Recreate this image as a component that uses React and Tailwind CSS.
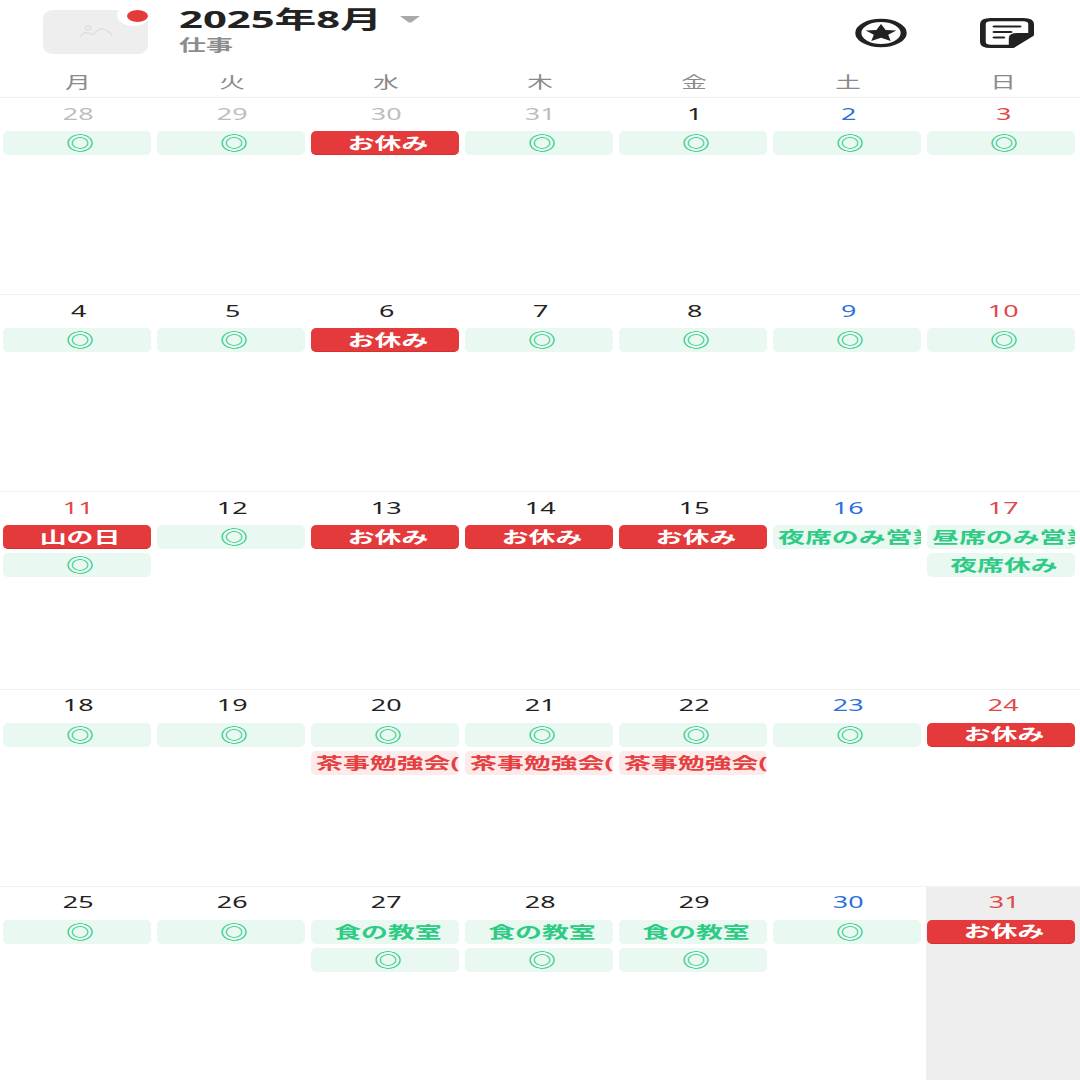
const font = { fontFamily: '"Noto Sans", "Noto Sans CJK JP", sans-serif' }

const O = { t: '◎', k: 'ok' }
const R = (t) => ({ t, k: 'red' })
const G = (t, long) => ({ t, k: 'green', long })
const P = { t: '茶事勉強会(', k: 'pink', long: true }
const OFF = R('お休み')
const K = { t: '食の教室', k: 'green' }

const weeks = [
  [
    { d: 28, m: true, e: [O] }, { d: 29, m: true, e: [O] }, { d: 30, m: true, e: [OFF] }, { d: 31, m: true, e: [O] },
    { d: 1, e: [O] }, { d: 2, e: [O] }, { d: 3, e: [O] },
  ],
  [
    { d: 4, e: [O] }, { d: 5, e: [O] }, { d: 6, e: [OFF] }, { d: 7, e: [O] },
    { d: 8, e: [O] }, { d: 9, e: [O] }, { d: 10, e: [O] },
  ],
  [
    { d: 11, c: 'text-[#e04848]', e: [R('山の日'), O] }, { d: 12, e: [O] }, { d: 13, e: [OFF] }, { d: 14, e: [OFF] },
    { d: 15, e: [OFF] }, { d: 16, e: [G('夜席のみ営業', true)] }, { d: 17, e: [G('昼席のみ営業', true), G('夜席休み')] },
  ],
  [
    { d: 18, e: [O] }, { d: 19, e: [O] }, { d: 20, e: [O, P] }, { d: 21, e: [O, P] },
    { d: 22, e: [O, P] }, { d: 23, e: [O] }, { d: 24, e: [OFF] },
  ],
  [
    { d: 25, e: [O] }, { d: 26, e: [O] }, { d: 27, e: [K, O] }, { d: 28, e: [K, O] },
    { d: 29, e: [K, O] }, { d: 30, e: [O] }, { d: 31, today: true, e: [OFF] },
  ],
]

const labels = ['月', '火', '水', '木', '金', '土', '日']

const tones = {
  ok: 'bg-[#e9f8f1] text-[#2ccb85] font-bold text-[18px]',
  green: 'bg-[#e9f8f1] text-[#2ecb85] font-bold text-[16px]',
  red: 'bg-[#e53a3c] text-white font-bold text-[16px] border-b border-[#d5302f]',
  pink: 'bg-[#fdeaea] text-[#e5403f] font-bold text-[16px]',
}

function Event({ ev, today }) {
  return (
    <div className={`w-[148px] h-6 rounded-[5px] overflow-hidden flex items-center leading-none ${today ? 'ml-px' : 'ml-[3px]'} ${tones[ev.k]} ${ev.long ? 'justify-start pl-[5px]' : 'justify-center pl-[6px]'}`}>
      <span className={`inline-block whitespace-nowrap ${ev.k === 'ok' ? 'scale-x-[1.55]' : 'scale-x-[1.68]'} ${ev.long ? 'origin-left' : 'origin-center'}`}>{ev.t}</span>
    </div>
  )
}

function Day({ day, col }) {
  let color = 'text-[#222]'
  if (day.m) color = 'text-[#bdbdbd]'
  else if (day.c) color = day.c
  else if (col === 5) color = 'text-[#2f6fe0]'
  else if (col === 6) color = 'text-[#e04848]'
  return (
    <div className={day.today ? 'ml-[2px] bg-[#eeeeee]' : ''}>
      <div className={`h-[33px] flex items-center justify-center pb-[2px] pl-[3px] text-[16px] leading-none ${color}`}>
        <span className="inline-block scale-x-[1.68]">{day.d}</span>
      </div>
      <div className="flex flex-col gap-1">
        {day.e.map((ev, i) => <Event key={i} ev={ev} today={day.today} />)}
      </div>
    </div>
  )
}

function StarIcon() {
  return (
    <svg className="mt-[18px] shrink-0" width="54" height="30" viewBox="0 0 30 30" preserveAspectRatio="none">
      <circle cx="15" cy="15" r="12.6" fill="none" stroke="#222" strokeWidth="3.4" />
      <path d="M15 6 L17.6 12 L23.5 12.6 L19 16.8 L20.4 23 L15 19.8 L9.6 23 L11 16.8 L6.5 12.6 L12.4 12 Z" fill="#222" />
    </svg>
  )
}

function NoteIcon() {
  return (
    <svg className="ml-[72px] mr-[46px] mt-[18px] shrink-0" width="54" height="30" viewBox="0 0 30 30" preserveAspectRatio="none">
      <path d="M6 1.6 H24 Q28.4 1.6 28.4 6 V17 L18 28.4 H6 Q1.6 28.4 1.6 24 V6 Q1.6 1.6 6 1.6 Z" fill="none" stroke="#222" strokeWidth="3.2" strokeLinejoin="round" />
      <path d="M29 15 V18 L19 29 H16 V20 Q16 15 21 15 Z" fill="#222" />
      <path d="M8 8.5 H22 M8 14 H17 M8 19.5 H13" stroke="#222" strokeWidth="2.2" fill="none" strokeLinecap="round" />
    </svg>
  )
}

export default function App() {
  return (
    <div className="h-screen overflow-hidden bg-white" style={font}>
      <div className="h-[70px] flex items-start">
        <div className="relative ml-[43px] mt-[10px] w-[105px] h-[44px] shrink-0 rounded-[9px] bg-[#eeeeee] flex items-center justify-center">
          <svg width="34" height="14" viewBox="0 0 34 14" fill="none" stroke="#dcdcdc" strokeWidth="1.2">
            <ellipse cx="9" cy="3" rx="3" ry="1.8" />
            <path d="M1 12 C5 6 9 7 14 10 C18 5 22 3 25 4 C28 5 31 8 33 10" />
          </svg>
          <div className="absolute -top-[6px] -right-[2px] w-[33px] h-[22px] rounded-[50%] bg-white" />
          <div className="absolute top-0 right-0 w-[21px] h-[12px] rounded-[50%] bg-[#e53a3c]" />
        </div>
        <div className="ml-[31px] mt-[5px] w-[260px] shrink-0">
          <div className="flex items-center">
            <span className="inline-block origin-left scale-x-[1.74] whitespace-nowrap text-[24px] leading-[28px] font-bold text-[#222] w-[115px]">2025年8月</span>
            <svg className="ml-[106px] shrink-0" width="20" height="7" viewBox="0 0 20 7"><path d="M0 0 H20 L12 6 Q10 7 8 6 Z" fill="#a9a9a9" /></svg>
          </div>
          <div className="mt-[2px] text-[16px] leading-5 font-bold text-[#8c8c8c]">
            <span className="inline-block origin-left scale-x-[1.68]">仕事</span>
          </div>
        </div>
        <div className="flex-1" />
        <StarIcon />
        <NoteIcon />
      </div>

      <div className="h-[28px] grid grid-cols-[repeat(6,154px)_1fr] border-b border-[#f0f0f0]">
        {labels.map((l) => (
          <div key={l} className="flex items-center justify-center text-[16px] text-[#8a8a8a] leading-none pb-[4px] pl-[2px]">
            <span className="inline-block scale-x-[1.6]">{l}</span>
          </div>
        ))}
      </div>

      {weeks.map((week, i) => (
        <div key={i} className={`h-[197.2px] grid grid-cols-[repeat(6,154px)_1fr] ${i < 4 ? 'border-b border-[#f3f3f3]' : ''}`}>
          {week.map((day, j) => <Day key={j} day={day} col={j} />)}
        </div>
      ))}
    </div>
  )
}
